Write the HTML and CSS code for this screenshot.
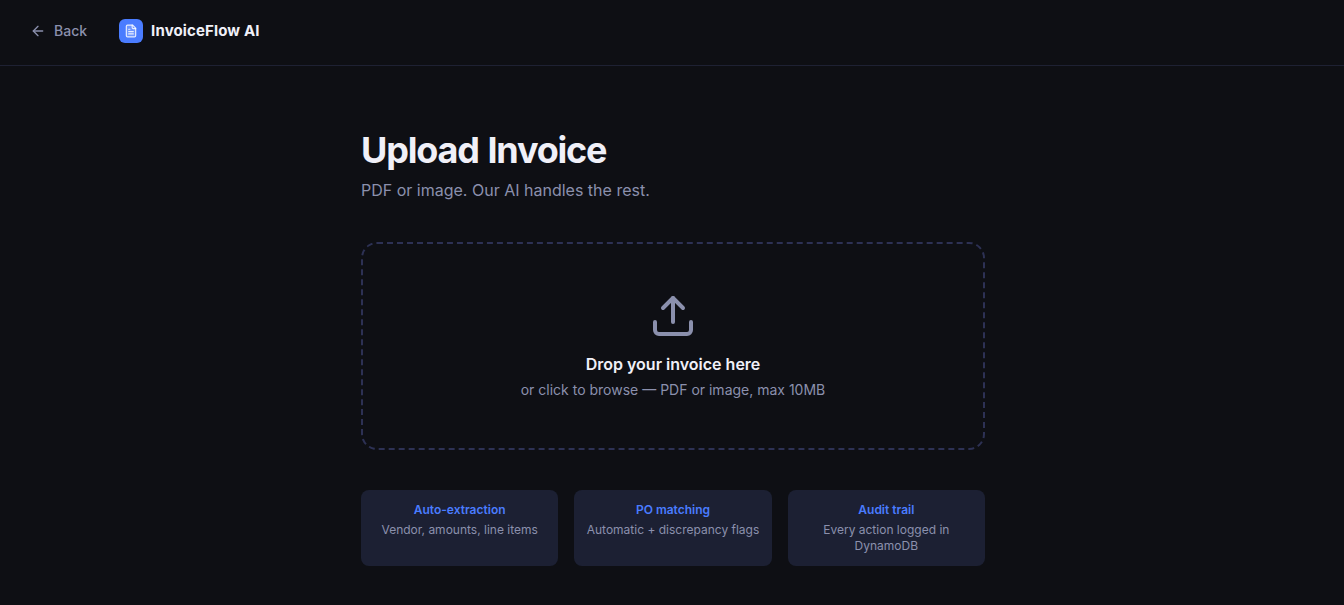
FILE: index.html
```html
<!DOCTYPE html>
<html lang="en">
<head>
    <meta charset="UTF-8">
    <meta name="viewport" content="width=device-width, initial-scale=1.0">
    <title>Upload Invoice - InvoiceFlow AI</title>
    <link rel="stylesheet" href="styles.css">
</head>
<body>
    <header class="header">
        <a class="back" href="#">
            <svg width="16" height="16" viewBox="0 0 24 24"><path d="m12 19-7-7 7-7"/><path d="M19 12H5"/></svg>
            <span>Back</span>
        </a>
        <div class="brand">
            <div class="brand-icon">
                <svg width="14" height="14" viewBox="0 0 24 24"><path class="sheet" d="M15 2H6a2 2 0 0 0-2 2v16a2 2 0 0 0 2 2h12a2 2 0 0 0 2-2V7Z"/><path d="M14 2v4a2 2 0 0 0 2 2h4"/><path d="M10 9H8"/><path d="M16 13H8"/><path d="M16 17H8"/></svg>
            </div>
            <span class="brand-name">InvoiceFlow AI</span>
        </div>
    </header>

    <main class="container">
        <h1 class="title">Upload Invoice</h1>
        <p class="subtitle">PDF or image. Our AI handles the rest.</p>

        <div class="dropzone">
            <svg width="48" height="48" viewBox="0 0 24 24"><path d="M21 15v4a2 2 0 0 1-2 2H5a2 2 0 0 1-2-2v-4"/><path d="m17 8-5-5-5 5"/><path d="M12 3v12"/></svg>
            <p class="drop-title">Drop your invoice here</p>
            <p class="drop-hint">or click to browse — PDF or image, max 10MB</p>
        </div>

        <div class="features">
            <div class="card">
                <h3>Auto-extraction</h3>
                <p>Vendor, amounts, line items</p>
            </div>
            <div class="card">
                <h3>PO matching</h3>
                <p>Automatic + discrepancy flags</p>
            </div>
            <div class="card">
                <h3>Audit trail</h3>
                <p>Every action logged in DynamoDB</p>
            </div>
        </div>
    </main>
</body>
</html>
```
FILE: styles.css
```css
* {
    margin: 0;
    padding: 0;
    box-sizing: border-box;
}
body {
    min-height: 100vh;
    background: #0e0f14;
    color: #f0f0f8;
    font-family: Inter, sans-serif;
    overflow: hidden;
}
svg {
    display: block;
    fill: none;
    stroke: currentColor;
    stroke-width: 2;
    stroke-linecap: round;
    stroke-linejoin: round;
}
.header {
    display: flex;
    align-items: center;
    gap: 32px;
    height: 66px;
    padding: 0 30px 4px;
    border-bottom: 1px solid #1e2133;
}
.back {
    display: flex;
    align-items: center;
    gap: 8px;
    color: #8b90ad;
    font-size: 14px;
    font-weight: 500;
    line-height: 20px;
    text-decoration: none;
}
.brand {
    display: flex;
    align-items: center;
    gap: 8px;
}
.brand-icon {
    display: flex;
    align-items: center;
    justify-content: center;
    width: 24px;
    height: 24px;
    border-radius: 6px;
    background: #4a7cff;
    color: rgba(255, 255, 255, 0.85);
}
.brand-icon .sheet {
    fill: rgba(255, 255, 255, 0.2);
}
.brand-name {
    font-size: 15px;
    font-weight: 700;
    line-height: 24px;
    letter-spacing: 0.14px;
}
.container {
    width: 626px;
    margin: 0 auto;
    padding: 64px 0 0 2px;
}
.title {
    font-size: 36px;
    font-weight: 700;
    line-height: 40px;
    letter-spacing: -1.2px;
    word-spacing: 1.5px;
}
.subtitle {
    margin: 8px 0 40px;
    color: #8b90ad;
    font-size: 16px;
    line-height: 24px;
}
.dropzone {
    display: flex;
    flex-direction: column;
    align-items: center;
    padding: 48px;
    border: 2px dashed #2d3154;
    border-radius: 16px;
    color: #8b90ad;
}
.drop-title {
    margin: 12px 0 4px;
    color: #f0f0f8;
    font-size: 16px;
    font-weight: 600;
    line-height: 24px;
}
.drop-hint {
    font-size: 14px;
    line-height: 20px;
}
.features {
    display: grid;
    grid-template-columns: repeat(3, 1fr);
    gap: 16px;
    margin-top: 40px;
}
.card {
    padding: 12px;
    border-radius: 8px;
    background: #1c2033;
    font-size: 12px;
    line-height: 16px;
    text-align: center;
}
.card h3 {
    margin-bottom: 4px;
    color: #4a7cff;
    font-size: 12px;
    font-weight: 600;
}
.card p {
    color: #8b90ad;
}
```
